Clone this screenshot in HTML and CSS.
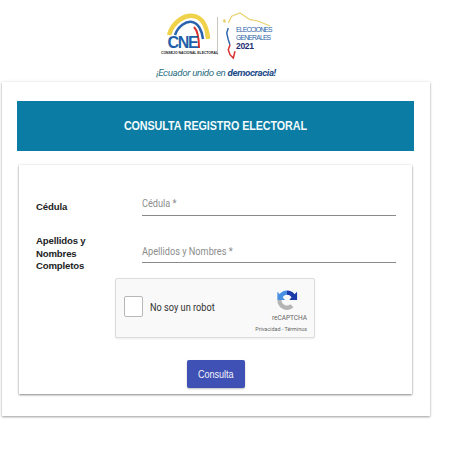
FILE: index.html
```html
<!DOCTYPE html>
<html lang="es">
<head>
<meta charset="utf-8">
<title>Consulta Registro Electoral</title>
<link rel="stylesheet" href="styles.css">
</head>
<body>
<header class="brand">
  <div class="logos">
    <div class="cne">
      <svg class="arc" viewBox="0 0 53 38" width="53" height="38" aria-hidden="true">
        <path d="M8 23C12 9 24 3 32 4C41 5 46 14 47 27" fill="none" stroke="#f0d24a" stroke-width="4.500"/>
        <path d="M14 23C17 14 25 9 31 10C37 11 41 18 42 27" fill="none" stroke="#2a63ad" stroke-width="2.500"/>
        <path d="M33 15C36 18 38 26 38 36" fill="none" stroke="#d8322f" stroke-width="2"/>
      </svg>
      <span class="cne-mark">CNE</span>
      <span class="cne-name">CONSEJO NACIONAL ELECTORAL</span>
    </div>
    <span class="divider"></span>
    <div class="elec">
      <svg class="map" viewBox="0 0 50 52" width="50" height="52" aria-hidden="true">
        <path d="M6.300 11L9.700 4.300L18 1L28 7.700L36 9L48 14" fill="none" stroke="#e8d271" stroke-width="1.200"/>
        <path d="M0.700 8L3 7L4 10L2 11Z" fill="#e8d271"/>
        <path d="M6.300 16L4.700 21L6.300 27.700L8 32.700" fill="none" stroke="#2a63ad" stroke-width="1.400"/>
        <path d="M8 32.700L6.300 37.700L8 42.700L11.300 46L13 39.300" fill="none" stroke="#d8322f" stroke-width="1.500"/>
      </svg>
      <p class="elec-text">ELECCIONES<br>GENERALES<br><b>2021</b></p>
    </div>
  </div>
  <p class="tagline">¡Ecuador unido en <b>democracia!</b></p>
</header>

<main class="outer">
  <h1 class="banner"><span class="banner-text">CONSULTA REGISTRO ELECTORAL</span></h1>
  <form class="inner">
    <div class="row first">
      <label class="label label-one">Cédula</label>
      <div class="field"><span class="squeeze">Cédula *</span></div>
    </div>
    <div class="row second">
      <label class="label label-two">Apellidos y Nombres Completos</label>
      <div class="field field-two"><span class="squeeze">Apellidos y Nombres *</span></div>
    </div>
    <div class="captcha">
      <span class="check"></span>
      <span class="robot"><span class="squeeze">No soy un robot</span></span>
      <div class="rc">
        <svg class="rc-icon" viewBox="0 0 24 24" width="22" height="22" aria-hidden="true">
          <path d="M12 1.500A10.500 10.500 0 0 0 3 6.600L6.800 10A6 6 0 0 1 12 6.300Z" fill="#4a90e2"/>
          <path d="M12 1.500A10.500 10.500 0 0 1 20.300 5.600L23 3V12H14.500L17 9A6 6 0 0 0 12 6.300Z" fill="#1c3aa9"/>
          <path d="M1.500 12H6A6 6 0 0 0 15.800 16.600L19 20A10.500 10.500 0 0 1 1.500 12Z" fill="#b4b4b4"/>
          <path d="M1.500 3V12H10Z" fill="#4a90e2"/>
        </svg>
        <span class="rc-name">reCAPTCHA</span>
        <span class="rc-links">Privacidad - Términos</span>
      </div>
    </div>
    <div class="actions">
      <button class="submit" type="button"><span class="submit-text">Consulta</span></button>
    </div>
  </form>
</main>
</body>
</html>
```
FILE: styles.css
```css
* { box-sizing: border-box; }
html, body { margin: 0; padding: 0; background: #fff; }
body { width: 474px; height: 474px; overflow: hidden; font-family: Roboto, "Liberation Sans", sans-serif; }

.brand { height: 82px; padding-top: 12px; display: flex; flex-direction: column; align-items: center; width: 432px; }
.logos { display: flex; align-items: flex-start; height: 54px; margin-left: 2px; }
.cne { width: 53px; height: 44px; position: relative; }
.arc { position: absolute; left: 0; top: 0; }
.cne-mark { position: absolute; top: 22px; left: 6.500px; font: 700 16px/17px "Liberation Sans", sans-serif; letter-spacing: -1.300px; color: #1d5fa8; }
.cne-name { position: absolute; top: 38.500px; left: 0; white-space: nowrap; font: 700 3.400px/5px "Liberation Sans", sans-serif; color: #222; }
.divider { width: 1px; height: 38px; background: #c8c8c0; margin: 5px 0 0 3px; }
.elec { position: relative; width: 55px; height: 54px; }
.map { position: absolute; left: 4px; top: 0; }
.elec-text { position: absolute; left: 18px; top: 14px; margin: 0; font: 6.800px/8px "Liberation Sans", sans-serif; letter-spacing: -.8px; color: #2e63a8; white-space: nowrap; }
.elec-text b { font-size: 8.500px; letter-spacing: -.3px; color: #1d2f6f; }
.tagline { margin: 0; font: italic 9.800px/13px Roboto, sans-serif; color: #2c6f83; letter-spacing: -.38px; }
.tagline b { color: #1d4c88; }

.outer { width: 428px; height: 334px; margin-left: 2px; padding: 19px 16px 0 15px; background: #fff; box-shadow: 0 1px 2px rgba(0,0,0,.35), 0 0 4px rgba(0,0,0,.08); }
.banner { margin: 0; height: 50px; background: #0b7ca4; color: #f2fafd; font: 700 12.500px/50px "Liberation Sans", sans-serif; text-align: center; letter-spacing: -.1px; }
.banner-text { display: inline-block; transform: scaleX(.86); }

.inner { width: 393px; height: 229px; margin: 14px 0 0 2px; padding: 30px 16px 0 17px; background: #fff; box-shadow: 0 1px 2px rgba(0,0,0,.45), 0 0 3px rgba(0,0,0,.08); }
.row { display: grid; grid-template-columns: 106px 254px; }
.second { margin-top: 19px; height: 38px; }
.label { font: 700 9.600px/12.700px "Liberation Sans", sans-serif; color: #222; letter-spacing: -.15px; width: 60px; }
.label-one { padding-top: 6px; }
.label-two { padding-top: 0; }
.field { height: 21px; border-bottom: 1px solid #8a8a8a; font-size: 11px; line-height: 18px; color: #8c8c8c; }
.field-two { margin-top: 7px; line-height: 20px; }
.squeeze { display: inline-block; white-space: nowrap; transform: scaleX(.835); transform-origin: left center; }

.captcha { width: 200px; height: 60px; margin: 5px 0 0 79px; display: flex; align-items: center; background: #f9f9f9; border: 1px solid #dcdcdc; border-radius: 2px; box-shadow: 0 1px 2px rgba(0,0,0,.08); padding-left: 8px; }
.check { width: 19px; height: 21px; margin-bottom: 3px; background: #fff; border: 1.500px solid #b8b8b8; border-radius: 2px; }
.robot { flex: none; width: 70px; margin: 0 0 2px 7px; font-size: 11px; color: #333; }
.rc { margin-left: auto; align-self: flex-start; display: flex; flex-direction: column; align-items: flex-end; padding: 10px 7px 0 0; }
.rc-icon { margin-right: 9px; }
.rc-name { margin-top: 2.500px; font-size: 6.500px; line-height: 9px; color: #666; }
.rc-links { margin-top: 3px; font-size: 5.400px; line-height: 7px; color: #666; white-space: nowrap; }

.actions { display: flex; justify-content: center; margin-top: 22px; margin-left: -17px; margin-right: -16px; }
.submit { width: 58px; height: 28px; padding: 0; border: 0; border-radius: 2px; background: #3f51b5; color: #f4f5fc; font: 11px/28px "Liberation Sans", sans-serif; box-shadow: 0 1px 2px rgba(0,0,0,.25); }
.submit-text { display: inline-block; transform: scaleX(.82); }
```
